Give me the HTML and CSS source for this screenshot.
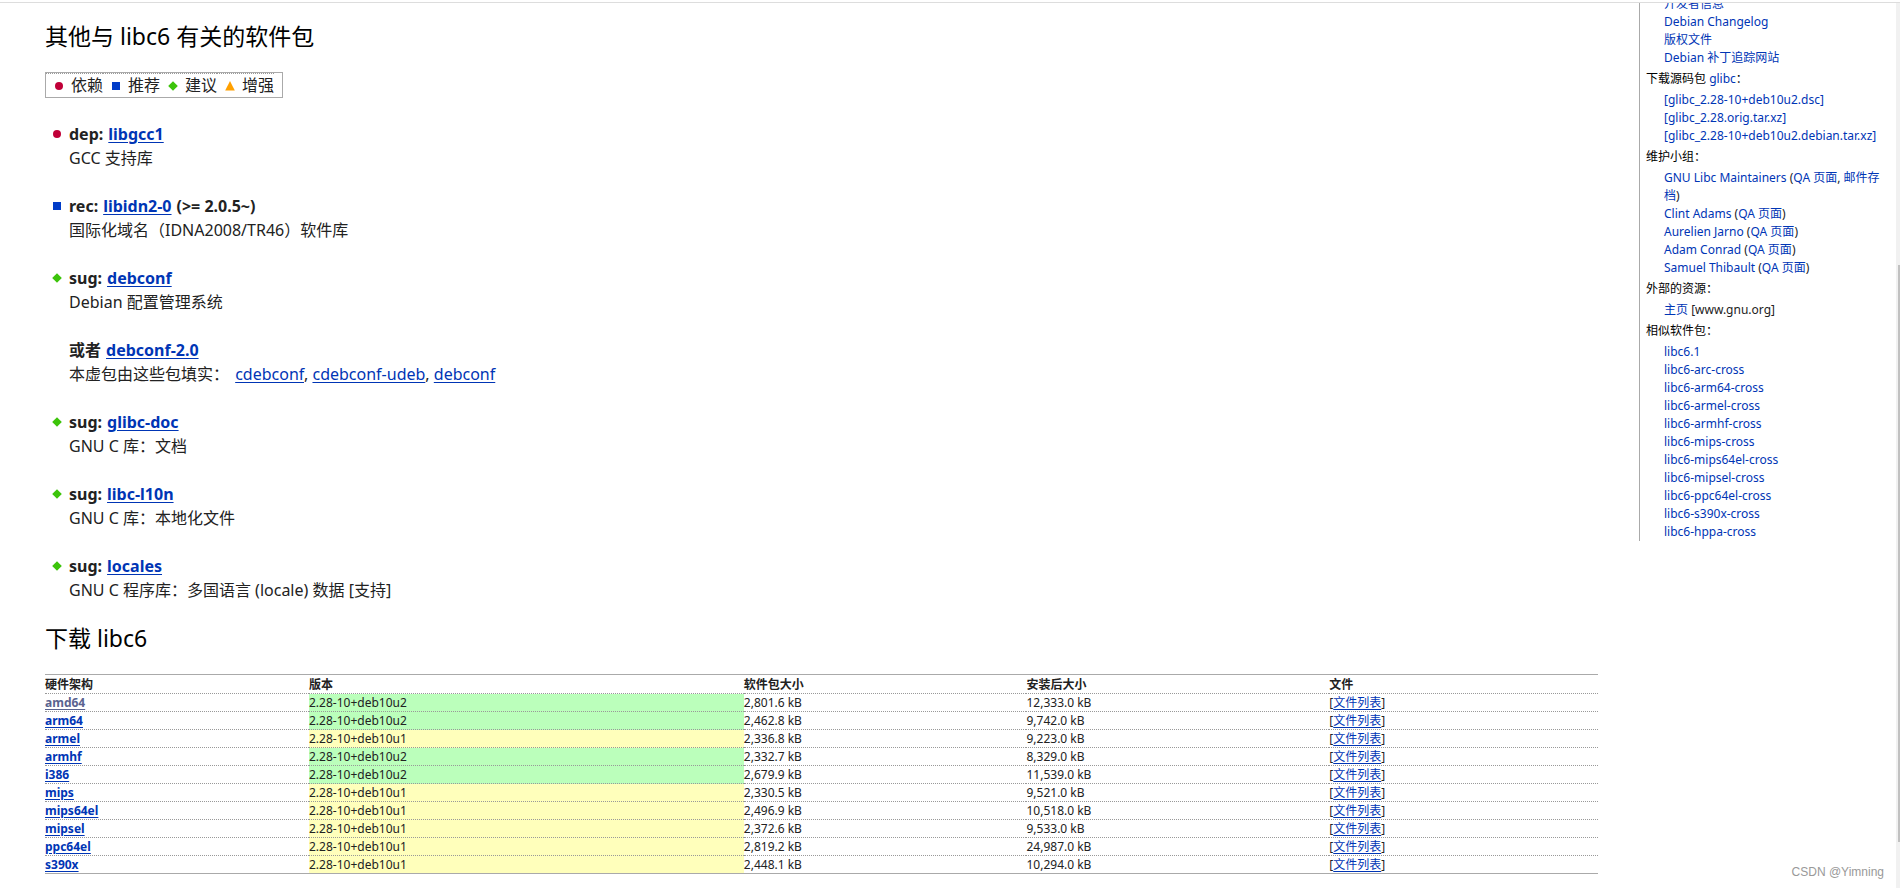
FILE: index.html
```html
<!DOCTYPE html>
<html lang="zh-CN">
<head>
<meta charset="utf-8">
<title>libc6 软件包</title>
<link rel="stylesheet" href="styles.css">
</head>
<body>
<svg class="symbols" aria-hidden="true">
  <symbol id="dep" viewBox="0 0 10 10"><circle cx="5" cy="5" r="4" fill="#c00038"/></symbol>
  <symbol id="rec" viewBox="0 0 10 10"><rect x="1" y="1" width="8" height="8" fill="#003cc8"/></symbol>
  <symbol id="sug" viewBox="0 0 10 10"><path d="M5 0.2 9.8 5 5 9.8 0.2 5Z" fill="#3cc40a"/></symbol>
  <symbol id="enh" viewBox="0 0 10 10"><path d="M5 0 9.8 9.6H0.2Z" fill="#ffa000"/></symbol>
</svg>
<div class="topline"></div>
<div class="page">
  <main class="content">
    <h2>其他与 libc6 有关的软件包</h2>
    <ul class="legend">
      <li><svg class="mark"><use href="#dep"/></svg>依赖</li>
      <li><svg class="mark"><use href="#rec"/></svg>推荐</li>
      <li><svg class="mark"><use href="#sug"/></svg>建议</li>
      <li><svg class="mark"><use href="#enh"/></svg>增强</li>
    </ul>
    <dl class="deps">
      <dt><svg class="mark"><use href="#dep"/></svg>dep: <a href="#">libgcc1</a></dt>
      <dd>GCC 支持库</dd>
      <dt><svg class="mark"><use href="#rec"/></svg>rec: <a href="#">libidn2-0</a> (&gt;= 2.0.5~)</dt>
      <dd>国际化域名（IDNA2008/TR46）软件库</dd>
      <dt><svg class="mark"><use href="#sug"/></svg>sug: <a href="#">debconf</a></dt>
      <dd>Debian 配置管理系统</dd>
      <dt>或者 <a href="#">debconf-2.0</a></dt>
      <dd>本虚包由这些包填实： <a class="first" href="#">cdebconf</a>, <a href="#">cdebconf-udeb</a>, <a href="#">debconf</a></dd>
      <dt><svg class="mark"><use href="#sug"/></svg>sug: <a href="#">glibc-doc</a></dt>
      <dd>GNU C 库：文档</dd>
      <dt><svg class="mark"><use href="#sug"/></svg>sug: <a href="#">libc-l10n</a></dt>
      <dd>GNU C 库：本地化文件</dd>
      <dt><svg class="mark"><use href="#sug"/></svg>sug: <a href="#">locales</a></dt>
      <dd>GNU C 程序库：多国语言 (locale) 数据 [支持]</dd>
    </dl>
    <h2>下载 libc6</h2>
    <table class="downloads">
      <colgroup><col class="c-arch"><col class="c-version"><col class="c-size"><col class="c-installed"><col class="c-files"></colgroup>
      <thead>
        <tr><th scope="col">硬件架构</th><th scope="col">版本</th><th scope="col">软件包大小</th><th scope="col">安装后大小</th><th scope="col">文件</th></tr>
      </thead>
      <tbody>
        <tr><th scope="row"><a class="visited" href="#">amd64</a></th><td class="new">2.28-10+deb10u2</td><td>2,801.6 kB</td><td>12,333.0 kB</td><td>[<a href="#">文件列表</a>]</td></tr>
        <tr><th scope="row"><a href="#">arm64</a></th><td class="new">2.28-10+deb10u2</td><td>2,462.8 kB</td><td>9,742.0 kB</td><td>[<a href="#">文件列表</a>]</td></tr>
        <tr><th scope="row"><a href="#">armel</a></th><td class="old">2.28-10+deb10u1</td><td>2,336.8 kB</td><td>9,223.0 kB</td><td>[<a href="#">文件列表</a>]</td></tr>
        <tr><th scope="row"><a href="#">armhf</a></th><td class="new">2.28-10+deb10u2</td><td>2,332.7 kB</td><td>8,329.0 kB</td><td>[<a href="#">文件列表</a>]</td></tr>
        <tr><th scope="row"><a href="#">i386</a></th><td class="new">2.28-10+deb10u2</td><td>2,679.9 kB</td><td>11,539.0 kB</td><td>[<a href="#">文件列表</a>]</td></tr>
        <tr><th scope="row"><a href="#">mips</a></th><td class="old">2.28-10+deb10u1</td><td>2,330.5 kB</td><td>9,521.0 kB</td><td>[<a href="#">文件列表</a>]</td></tr>
        <tr><th scope="row"><a href="#">mips64el</a></th><td class="old">2.28-10+deb10u1</td><td>2,496.9 kB</td><td>10,518.0 kB</td><td>[<a href="#">文件列表</a>]</td></tr>
        <tr><th scope="row"><a href="#">mipsel</a></th><td class="old">2.28-10+deb10u1</td><td>2,372.6 kB</td><td>9,533.0 kB</td><td>[<a href="#">文件列表</a>]</td></tr>
        <tr><th scope="row"><a href="#">ppc64el</a></th><td class="old">2.28-10+deb10u1</td><td>2,819.2 kB</td><td>24,987.0 kB</td><td>[<a href="#">文件列表</a>]</td></tr>
        <tr><th scope="row"><a href="#">s390x</a></th><td class="old">2.28-10+deb10u1</td><td>2,448.1 kB</td><td>10,294.0 kB</td><td>[<a href="#">文件列表</a>]</td></tr>
      </tbody>
    </table>
  </main>
  <aside class="side">
    <dl class="links">
      <dd><a href="#">开发者信息</a></dd>
      <dd><a href="#">Debian Changelog</a></dd>
      <dd><a href="#">版权文件</a></dd>
      <dd><a href="#">Debian 补丁追踪网站</a></dd>
      <dt>下载源码包 <a href="#">glibc</a>：</dt>
      <dd><a href="#">[glibc_2.28-10+deb10u2.dsc]</a></dd>
      <dd><a href="#">[glibc_2.28.orig.tar.xz]</a></dd>
      <dd><a href="#">[glibc_2.28-10+deb10u2.debian.tar.xz]</a></dd>
      <dt>维护小组：</dt>
      <dd><a href="#">GNU Libc Maintainers</a> (<a href="#">QA 页面</a>, <a href="#">邮件存档</a>)</dd>
      <dd><a href="#">Clint Adams</a> (<a href="#">QA 页面</a>)</dd>
      <dd><a href="#">Aurelien Jarno</a> (<a href="#">QA 页面</a>)</dd>
      <dd><a href="#">Adam Conrad</a> (<a href="#">QA 页面</a>)</dd>
      <dd><a href="#">Samuel Thibault</a> (<a href="#">QA 页面</a>)</dd>
      <dt>外部的资源：</dt>
      <dd><a href="#">主页</a> [www.gnu.org]</dd>
      <dt>相似软件包：</dt>
      <dd><a href="#">libc6.1</a></dd>
      <dd><a href="#">libc6-arc-cross</a></dd>
      <dd><a href="#">libc6-arm64-cross</a></dd>
      <dd><a href="#">libc6-armel-cross</a></dd>
      <dd><a href="#">libc6-armhf-cross</a></dd>
      <dd><a href="#">libc6-mips-cross</a></dd>
      <dd><a href="#">libc6-mips64el-cross</a></dd>
      <dd><a href="#">libc6-mipsel-cross</a></dd>
      <dd><a href="#">libc6-ppc64el-cross</a></dd>
      <dd><a href="#">libc6-s390x-cross</a></dd>
      <dd><a href="#">libc6-hppa-cross</a></dd>
    </dl>
    <p class="credit">CSDN @Yimning</p>
  </aside>
  <div class="scrollbar"><div class="thumb"></div></div>
</div>
</body>
</html>
```

FILE: styles.css
```css
* {
  box-sizing: border-box;
}

body {
  margin: 0;
  min-height: 100vh;
  display: flex;
  flex-direction: column;
  background: #fff;
  color: #222;
  font: 16px/24px "Noto Sans", "Noto Sans CJK SC", sans-serif;
}

a {
  color: #0035b5;
  text-underline-offset: 2px;
}

.symbols {
  display: none;
}

.topline {
  height: 3px;
  border-bottom: 1px solid #ddd;
}

.page {
  flex: 1;
  display: flex;
}

.content {
  flex: 1;
  padding: 19px 41px 0 45px;
}

h2 {
  margin: 0 0 22px;
  color: #000;
  font-size: 23px;
  line-height: 28px;
  font-weight: 400;
}

.mark {
  width: 10px;
  height: 10px;
}

.legend {
  display: inline-flex;
  margin: 0;
  padding: 0 8px 0 0;
  border: 1px solid #aaa;
  list-style: none;
}

.legend li {
  display: flex;
  align-items: center;
  gap: 7px;
  padding-left: 8px;
  border-top: 1px dotted #999;
  line-height: 23px;
}

.deps {
  margin: 24px 0 0;
}

.deps dt {
  display: flex;
  align-items: center;
  gap: 5px;
  padding-left: 24px;
  font-weight: 700;
}

.deps .mark {
  margin: 0 2px 0 -17px;
}

.deps dd {
  margin: 0 0 24px 24px;
}

.deps dd:last-child {
  margin-bottom: 22px;
}

.first {
  margin-left: 2px;
}

.downloads {
  width: 100%;
  border-collapse: collapse;
  table-layout: fixed;
  border-top: 1px solid #aaa;
  border-bottom: 1px solid #aaa;
  font-size: 12px;
  line-height: 17px;
}

.downloads th,
.downloads td {
  padding: 0;
  text-align: left;
}

.downloads thead th {
  padding-top: 1px;
}

.downloads tbody th,
.downloads tbody td {
  border-top: 1px dotted #999;
}

.c-arch { width: 17%; }
.c-version { width: 28%; }
.c-size { width: 18.2%; }
.c-installed { width: 19.5%; }
.c-files { width: 17.3%; }

.visited {
  color: #5a6390;
}

.new {
  background: #bfb;
}

.old {
  background: #ffb;
}

.side {
  width: 257px;
  display: flex;
  flex-direction: column;
  justify-content: space-between;
  overflow: hidden;
}

.links {
  margin: -8px 0 0;
  padding: 0 4px 0 6px;
  border-left: 1px solid #aaa;
  font-size: 12px;
  line-height: 18px;
}

.links a {
  text-decoration: none;
}

.links dt {
  margin: 3px 0;
  color: #000;
}

.links dd {
  margin: 0 0 0 18px;
}

.credit {
  margin: 0 12px 7px 0;
  color: #999;
  font: 12px/18px "Liberation Sans", sans-serif;
  text-align: right;
}

.scrollbar {
  width: 4px;
  display: grid;
  grid-template-rows: 262fr 577fr 46fr;
  background: #f1f1f1;
}

.thumb {
  grid-row: 2;
  margin-left: 2px;
  background: #c1c1c1;
}
```
